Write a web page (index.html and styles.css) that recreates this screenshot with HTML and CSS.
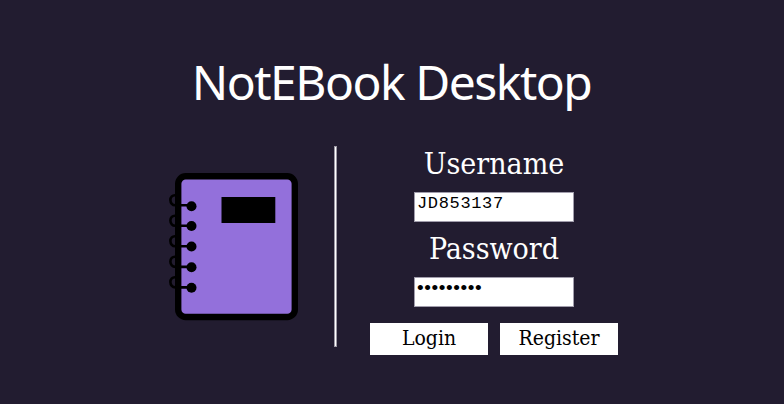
FILE: index.html
```html
<!DOCTYPE html>
<html lang="en">
<head>
<meta charset="utf-8">
<title>NotEBook Desktop</title>
<link rel="stylesheet" href="styles.css">
</head>
<body>
<h1 class="title"><span>NotEBook Desktop</span></h1>
<main class="panel">
  <svg class="notebook" width="132" height="150" viewBox="168 171 132 150" aria-hidden="true">
    <rect x="178.2" y="176.2" width="116.6" height="140.8" rx="7.5" fill="#9370db" stroke="#000" stroke-width="6.4"/>
    <rect x="221.5" y="197" width="53.8" height="26" fill="#000"/>
    <g fill="none" stroke="#000" stroke-width="2.6">
      <path d="M176 195.3C168.500 194 168.500 206 176 205.200H191"/>
      <path d="M176 215.800C168.500 214.500 168.500 226.500 176 225.700H191"/>
      <path d="M176 236.300C168.500 235 168.500 247 176 246.200H191"/>
      <path d="M176 256.800C168.500 255.500 168.500 267.500 176 266.900H191"/>
      <path d="M176 277.300C168.500 276 168.500 288 176 287.400H191"/>
    </g>
    <g fill="#000">
      <circle cx="191.500" cy="206.200" r="5"/>
      <circle cx="191.500" cy="226" r="5"/>
      <circle cx="191.500" cy="246.500" r="5"/>
      <circle cx="191.500" cy="267.300" r="5"/>
      <circle cx="191.500" cy="287.700" r="5"/>
    </g>
  </svg>
  <div class="divider"></div>
  <form class="login">
    <label class="label user" for="username">Username</label>
    <input class="field" id="username" type="text" value="JD853137">
    <label class="label pass" for="password">Password</label>
    <input class="field secret" id="password" type="password" value="notebook1">
    <div class="actions">
      <button class="button" type="button">Login</button>
      <button class="button" type="button">Register</button>
    </div>
  </form>
</main>
</body>
</html>
```
FILE: styles.css
```css
* { box-sizing: border-box; }
body {
  margin: 0;
  height: 404px;
  overflow: hidden;
  background: #221c30;
  color: #fff;
}
.title {
  margin: 0;
  padding: 50px 1px 0 0;
  height: 146px;
  text-align: center;
  font: 400 48px/64px "Noto Sans", sans-serif;
  letter-spacing: -1.5px;
}
.panel { display: flex; padding-left: 168px; }
.notebook { margin-top: 25px; flex: none; }
.divider {
  flex: none;
  width: 3px;
  height: 201px;
  margin-left: 34px;
  background: #fff;
  border: solid #9c98a4;
  border-width: 1px;
}
.login {
  display: flex;
  flex-direction: column;
  align-items: center;
  width: 248px;
  margin-left: 33px;
}
.label {
  height: 46px;
  padding-top: 1px;
  font: 30px/34px "DejaVu Serif Condensed", "DejaVu Serif", serif;
  font-stretch: condensed;
}
.pass { height: 55px; padding-top: 10px; }
.field {
  width: 160px;
  height: 30px;
  padding: 0 2px 8px;
  border: 1px solid #a19dac;
  border-radius: 0;
  background: #fff;
  color: #000;
  font: 17px/19px "Liberation Mono", monospace;
  letter-spacing: 0.65px;
}
.secret {
  padding-bottom: 9px;
  padding-left: 2px;
  font: 19px/20px "Liberation Sans", sans-serif;
  letter-spacing: 0.6px;
}
.actions { display: flex; gap: 12px; margin-top: 16px; }
.button {
  width: 118px;
  height: 32px;
  padding: 0 0 2px;
  border: 0;
  background: #fff;
  color: #000;
  font: 21px/30px "DejaVu Serif Condensed", "DejaVu Serif", serif;
  font-stretch: condensed;
}
```
